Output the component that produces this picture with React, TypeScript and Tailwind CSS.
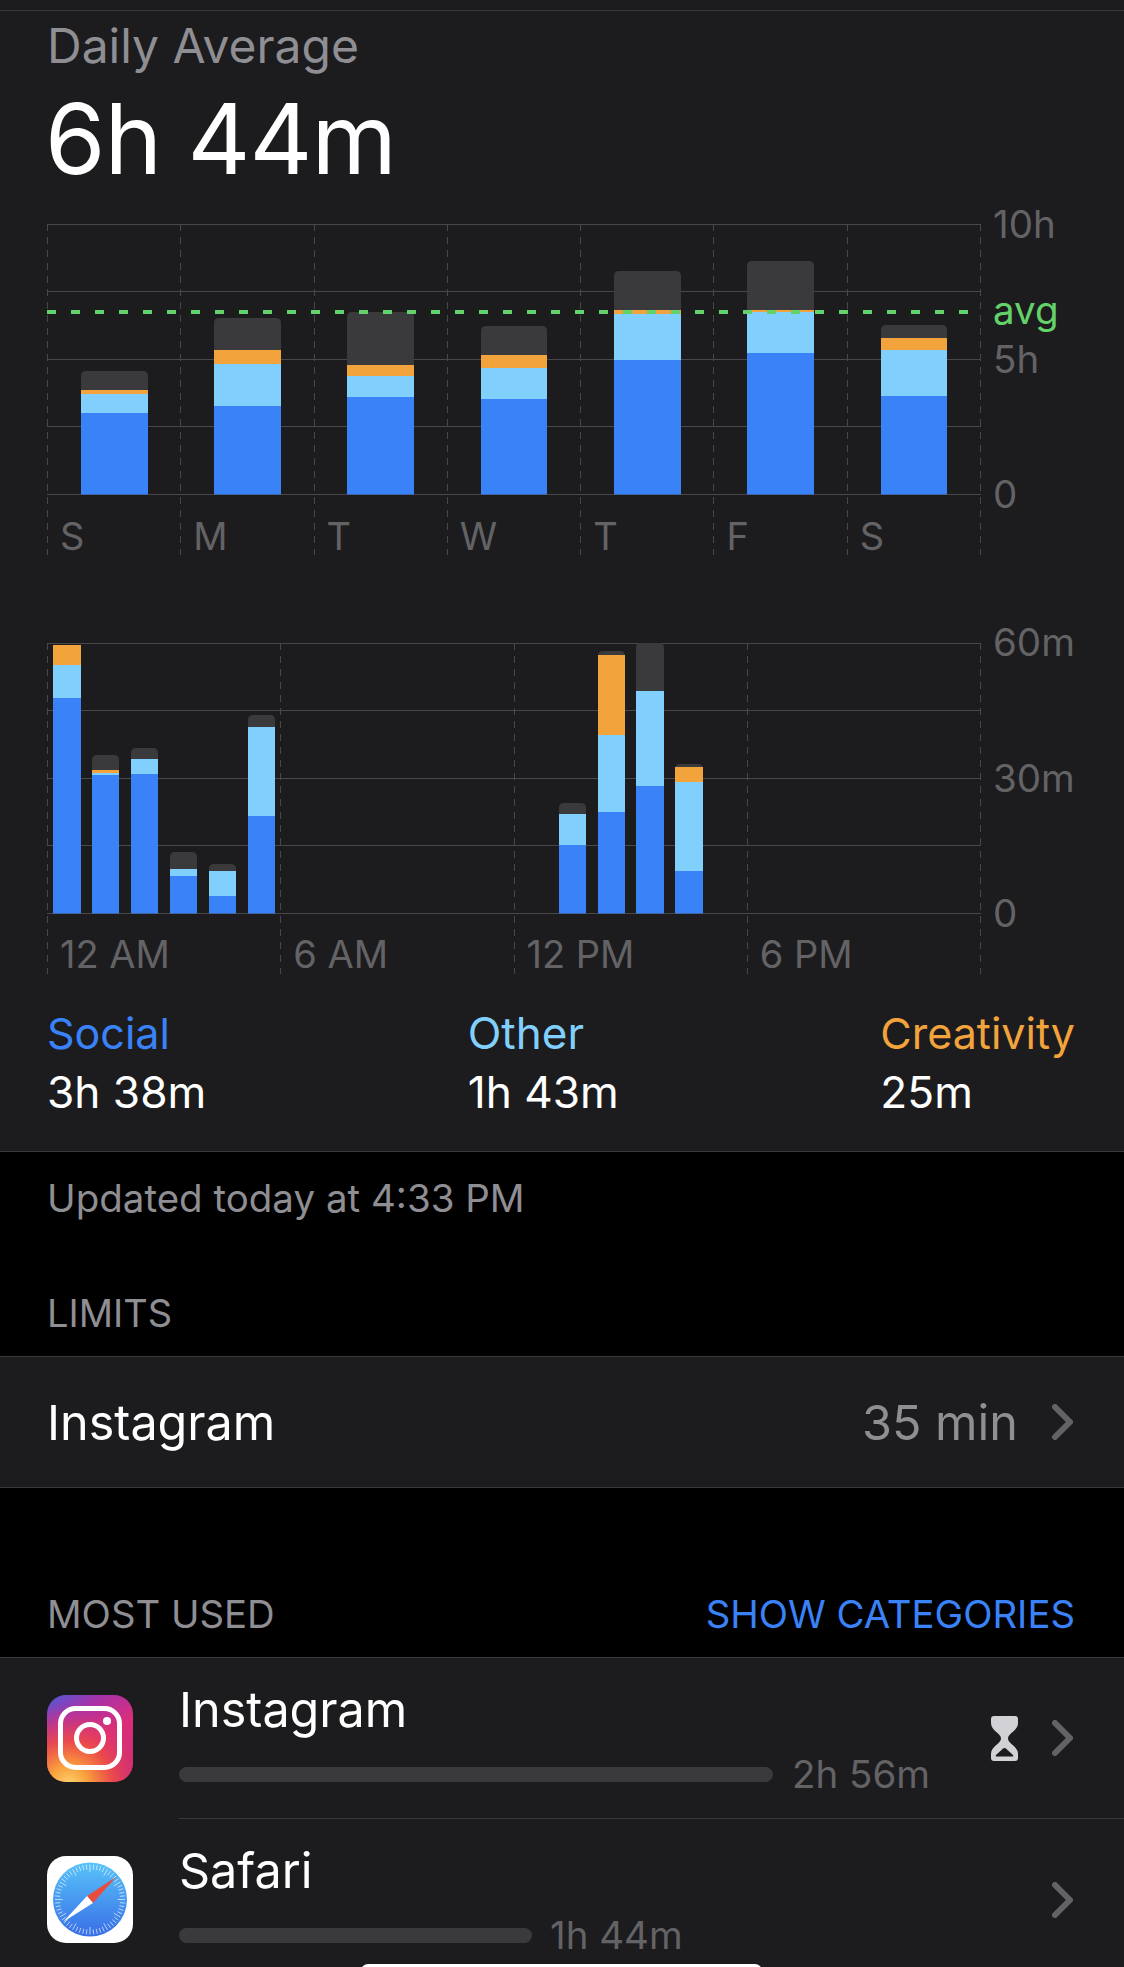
import React from 'react';

type Bar = { x: number; w: number; gray?: number; orange?: number; light: number; blue: number; top: number };

const dailyBars: Bar[] = [
  { x: 81, w: 67, top: 371, orange: 390, light: 394, blue: 413 },
  { x: 214, w: 67, top: 318, orange: 350, light: 364, blue: 406 },
  { x: 347, w: 67, top: 312, orange: 365, light: 376, blue: 397 },
  { x: 481, w: 66, top: 326, orange: 355, light: 368, blue: 399 },
  { x: 614, w: 67, top: 271, orange: 310, light: 314, blue: 360 },
  { x: 747, w: 67, top: 261, orange: 310, light: 312, blue: 353 },
  { x: 881, w: 66, top: 325, orange: 338, light: 350, blue: 396 },
];

const hourlyBars: Bar[] = [
  { x: 53, w: 28, top: 645, orange: 645, light: 665, blue: 698 },
  { x: 92, w: 27, top: 755, orange: 770, light: 773, blue: 775 },
  { x: 131, w: 27, top: 748, light: 759, blue: 774 },
  { x: 170, w: 27, top: 852, light: 869, blue: 876 },
  { x: 209, w: 27, top: 864, light: 871, blue: 896 },
  { x: 248, w: 27, top: 715, light: 727, blue: 816 },
  { x: 559, w: 27, top: 803, light: 814, blue: 845 },
  { x: 598, w: 27, top: 651, orange: 655, light: 735, blue: 812 },
  { x: 636, w: 28, top: 643, light: 691, blue: 786 },
  { x: 675, w: 28, top: 764, orange: 767, light: 782, blue: 871 },
];

const GRAY = '#3a3a3c';
const ORANGE = '#f2a33c';
const LIGHT = '#81cffc';
const BLUE = '#3a82f7';
const LINE = '#48484a';

function StackedBar({ bar, bottom }: { bar: Bar; bottom: number }) {
  const { x, w, top, orange, light, blue } = bar;
  const first = orange ?? light;
  const topColor = top === first ? ORANGE : GRAY;
  return (
    <g>
      <path d={`M${x} ${top + 5}q0 -5 5 -5h${w - 10}q5 0 5 5V${first + 1}H${x}Z`} fill={topColor} />
      {orange !== undefined && <rect x={x} y={orange} width={w} height={light - orange} fill={ORANGE} />}
      <rect x={x} y={light} width={w} height={blue - light} fill={LIGHT} />
      <rect x={x} y={blue} width={w} height={bottom - blue + 0.5} fill={BLUE} />
    </g>
  );
}

function ChartSvg({ top, height, rows, cols, bars, bottom, children }: { top: number; height: number; rows: number[]; cols: number[]; bars: Bar[]; bottom: number; children?: React.ReactNode }) {
  return (
    <svg width={985} height={height} viewBox={`0 ${top} 985 ${height}`} className="block shrink-0">
      {rows.map((y) => (
        <line key={y} x1={47} x2={981} y1={y + 0.5} y2={y + 0.5} stroke={LINE} strokeWidth={1} />
      ))}
      {cols.map((x) => (
        <line key={x} x1={x + 0.5} x2={x + 0.5} y1={top + 1} y2={top + height} stroke={LINE} strokeWidth={1} strokeDasharray="7 6" />
      ))}
      {bars.map((b) => (
        <StackedBar key={b.x} bar={b} bottom={bottom} />
      ))}
      {children}
    </svg>
  );
}

function AxisLabel({ children, className = 'text-[#636366]' }: { children: React.ReactNode; className?: string }) {
  return <div className={`h-0 flex items-center text-[38.5px] ${className}`}>{children}</div>;
}

function Chevron() {
  return (
    <svg width={21} height={36} viewBox="0 0 21 36" className="block shrink-0">
      <path d="M3 3l15 15L3 33" fill="none" stroke="#636366" strokeWidth={6} strokeLinecap="round" strokeLinejoin="round" />
    </svg>
  );
}

function Hourglass() {
  return (
    <svg width={27} height={45} viewBox="0 0 27 45" className="block shrink-0">
      <path
        d="M3 0H24Q27 0 27 3V7C27 15 17 17 17 22.5C17 28 27 30 27 38V42Q27 45 24 45H3Q0 45 0 42V38C0 30 10 28 10 22.5C10 17 0 15 0 7V3Q0 0 3 0Z"
        fill="#d1d1d6"
      />
      <path d="M13.5 32Q15 32 16.5 34L22 39Q23 40.5 21 40.5H6Q4 40.5 5 39L10.5 34Q12 32 13.5 32Z" fill="#1c1c1e" />
    </svg>
  );
}

function InstagramIcon() {
  return (
    <svg width={86} height={87} viewBox="0 0 86 87" className="block shrink-0">
      <defs>
        <linearGradient id="igBase" x1="0.1" y1="0" x2="0.7" y2="1">
          <stop offset="0" stopColor="#5a55d2" />
          <stop offset="0.25" stopColor="#a832a8" />
          <stop offset="0.6" stopColor="#dc2e78" />
          <stop offset="1" stopColor="#c92a7a" />
        </linearGradient>
        <radialGradient id="igWarm" cx="0.25" cy="1.05" r="0.95">
          <stop offset="0" stopColor="#fdd870" />
          <stop offset="0.25" stopColor="#f9a03c" />
          <stop offset="0.55" stopColor="#ef4f42" stopOpacity="0.85" />
          <stop offset="1" stopColor="#dc2e78" stopOpacity="0" />
        </radialGradient>
      </defs>
      <rect width={86} height={87} rx={19} fill="url(#igBase)" />
      <rect width={86} height={87} rx={19} fill="url(#igWarm)" />
      <rect x={13.5} y={13.5} width={59} height={59} rx={15} fill="none" stroke="#fff" strokeWidth={5} />
      <circle cx={43} cy={43} r={13.5} fill="none" stroke="#fff" strokeWidth={5} />
      <circle cx={60} cy={26} r={4} fill="#fff" />
    </svg>
  );
}

function SafariIcon() {
  const ticks = Array.from({ length: 60 }, (_, i) => (i * Math.PI) / 30);
  return (
    <svg width={86} height={87} viewBox="0 0 86 87" className="block shrink-0">
      <defs>
        <linearGradient id="safariFace" x1="0" y1="0" x2="0" y2="1">
          <stop offset="0" stopColor="#58c3f9" />
          <stop offset="1" stopColor="#386ee6" />
        </linearGradient>
      </defs>
      <rect width={86} height={87} rx={19} fill="#fff" />
      <circle cx={43} cy={43.5} r={37} fill="url(#safariFace)" />
      {ticks.map((a, i) => (
        <line
          key={i}
          x1={43 + Math.cos(a) * (i % 5 === 0 ? 27.5 : 30)}
          y1={43.5 + Math.sin(a) * (i % 5 === 0 ? 27.5 : 30)}
          x2={43 + Math.cos(a) * 35}
          y2={43.5 + Math.sin(a) * 35}
          stroke="#fff"
          strokeOpacity={0.8}
          strokeWidth={0.8}
        />
      ))}
      <polygon points="69,21 40,40 46,47" fill="#ea4c3c" />
      <polygon points="16,66 40,40 46,47" fill="#fff" />
    </svg>
  );
}

const days = ['S', 'M', 'T', 'W', 'T', 'F', 'S'];
const hours = ['12 AM', '6 AM', '12 PM', '6 PM'];

const App: React.FC = () => {
  return (
    <div className="relative w-[1124px] h-[1967px] overflow-hidden bg-black text-white font-[Inter,sans-serif]">
      <section className="h-[1152px] bg-[#1c1c1e] border-b border-[#3a3a3c] pt-[10px]">
        <div className="h-px bg-[#3a3a3c]" />
        <div className="pl-[47px] mt-[5px] text-[48px] leading-[60px] text-[#8e8e93]">Daily Average</div>
        <div className="pl-[45px] mt-[3px] text-[97.5px] leading-[120px] tracking-[-1px]">6h 44m</div>

        <div className="relative flex mt-[24px]">
          <ChartSvg top={223} height={332} rows={[224, 291, 359, 426, 494]} cols={[47, 180, 314, 447, 580, 713, 847, 980]} bars={dailyBars} bottom={494}>
            <line x1={47} x2={969} y1={312} y2={312} stroke="#64d26a" strokeWidth={4} strokeDasharray="9 15" />
          </ChartSvg>
          <div className="relative ml-[8px] mt-[2px] h-[270px] flex flex-col justify-between">
            <AxisLabel>10h</AxisLabel>
            <AxisLabel>5h</AxisLabel>
            <AxisLabel>0</AxisLabel>
            <div className="absolute top-[86px] left-0">
              <AxisLabel className="text-[#64d26a]">avg</AxisLabel>
            </div>
          </div>
          <div className="absolute left-[47px] top-[293px] w-[933px] grid grid-cols-7 text-[38px] leading-[40px] text-[#636366]">
            {days.map((d, i) => (
              <span key={i} className="pl-[13px]">{d}</span>
            ))}
          </div>
        </div>

        <div className="relative flex mt-[87px]">
          <ChartSvg top={642} height={332} rows={[643, 710, 778, 845, 913]} cols={[47, 280, 514, 747, 980]} bars={hourlyBars} bottom={913}>
          </ChartSvg>
          <div className="relative ml-[8px] mt-[1px] h-[271px] flex flex-col justify-between">
            <AxisLabel>60m</AxisLabel>
            <AxisLabel>30m</AxisLabel>
            <AxisLabel>0</AxisLabel>
          </div>
          <div className="absolute left-[47px] top-[292px] w-[933px] grid grid-cols-4 text-[38px] leading-[40px] text-[#636366]">
            {hours.map((h) => (
              <span key={h} className="pl-[13px]">{h}</span>
            ))}
          </div>
        </div>

        <div className="flex justify-between pl-[47px] pr-[49px] mt-[31px]">
          <div>
            <div className="text-[43px] leading-[56px] text-[#3a82f7]">Social</div>
            <div className="mt-[3px] text-[44.2px] leading-[56px]">3h 38m</div>
          </div>
          <div>
            <div className="text-[44px] leading-[56px] text-[#81cffc]">Other</div>
            <div className="mt-[3px] text-[44.2px] leading-[56px]">1h 43m</div>
          </div>
          <div>
            <div className="text-[43px] leading-[56px] text-[#f2a33c]">Creativity</div>
            <div className="mt-[3px] text-[44.2px] leading-[56px]">25m</div>
          </div>
        </div>
      </section>

      <div className="pl-[47px] pt-[24px] text-[38.5px] leading-[44px] text-[#8e8e93]">Updated today at 4:33 PM</div>
      <div className="pl-[47px] mt-[71px] text-[38px] leading-[44px] text-[#8e8e93]">LIMITS</div>

      <div className="mt-[21px] h-[132px] bg-[#1c1c1e] border-y border-[#3a3a3c] flex items-center pl-[47px] pr-[51px]">
        <span className="pt-[3px] text-[48.5px]">Instagram</span>
        <span className="pt-[3px] ml-auto text-[48.5px] text-[#8e8e93]">35 min</span>
        <span className="ml-[34px]"><Chevron /></span>
      </div>

      <div className="flex justify-between pl-[47px] pr-[49px] mt-[104px] text-[38.3px] leading-[44px]">
        <span className="text-[#8e8e93]">MOST USED</span>
        <span className="text-[#3a82f7]">SHOW CATEGORIES</span>
      </div>

      <div className="mt-[21px] bg-[#1c1c1e] border-t border-[#3a3a3c] pl-[47px]">
        <div className="flex h-[161px] items-center">
          <InstagramIcon />
          <div className="ml-[46px] flex-1 h-full border-b border-[#3a3a3c] relative flex items-center pr-[51px]">
            <div className="flex-1 h-full pt-[22px]">
              <div className="text-[48.5px] leading-[60px]">Instagram</div>
              <div className="flex items-center mt-[14px]">
                <div className="w-[594px] h-[15px] rounded-full bg-[#3a3a3c]" />
                <span className="ml-[19px] text-[38.5px] leading-[40px] text-[#636366]">2h 56m</span>
              </div>
            </div>
            <Hourglass />
            <span className="ml-[34px]"><Chevron /></span>
          </div>
        </div>
        <div className="flex h-[161px] items-center">
          <SafariIcon />
          <div className="ml-[46px] flex-1 h-full flex items-center pr-[51px]">
            <div className="flex-1 h-full pt-[22px]">
              <div className="text-[48.5px] leading-[60px]">Safari</div>
              <div className="flex items-center mt-[14px]">
                <div className="w-[353px] h-[15px] rounded-full bg-[#3a3a3c]" />
                <span className="ml-[18px] text-[38.5px] leading-[40px] text-[#636366]">1h 44m</span>
              </div>
            </div>
            <Chevron />
          </div>
        </div>
      </div>

      <div className="absolute left-[361px] top-[1964px] w-[401px] h-[14px] rounded-[7px] bg-white" />
    </div>
  );
};

export default App;
